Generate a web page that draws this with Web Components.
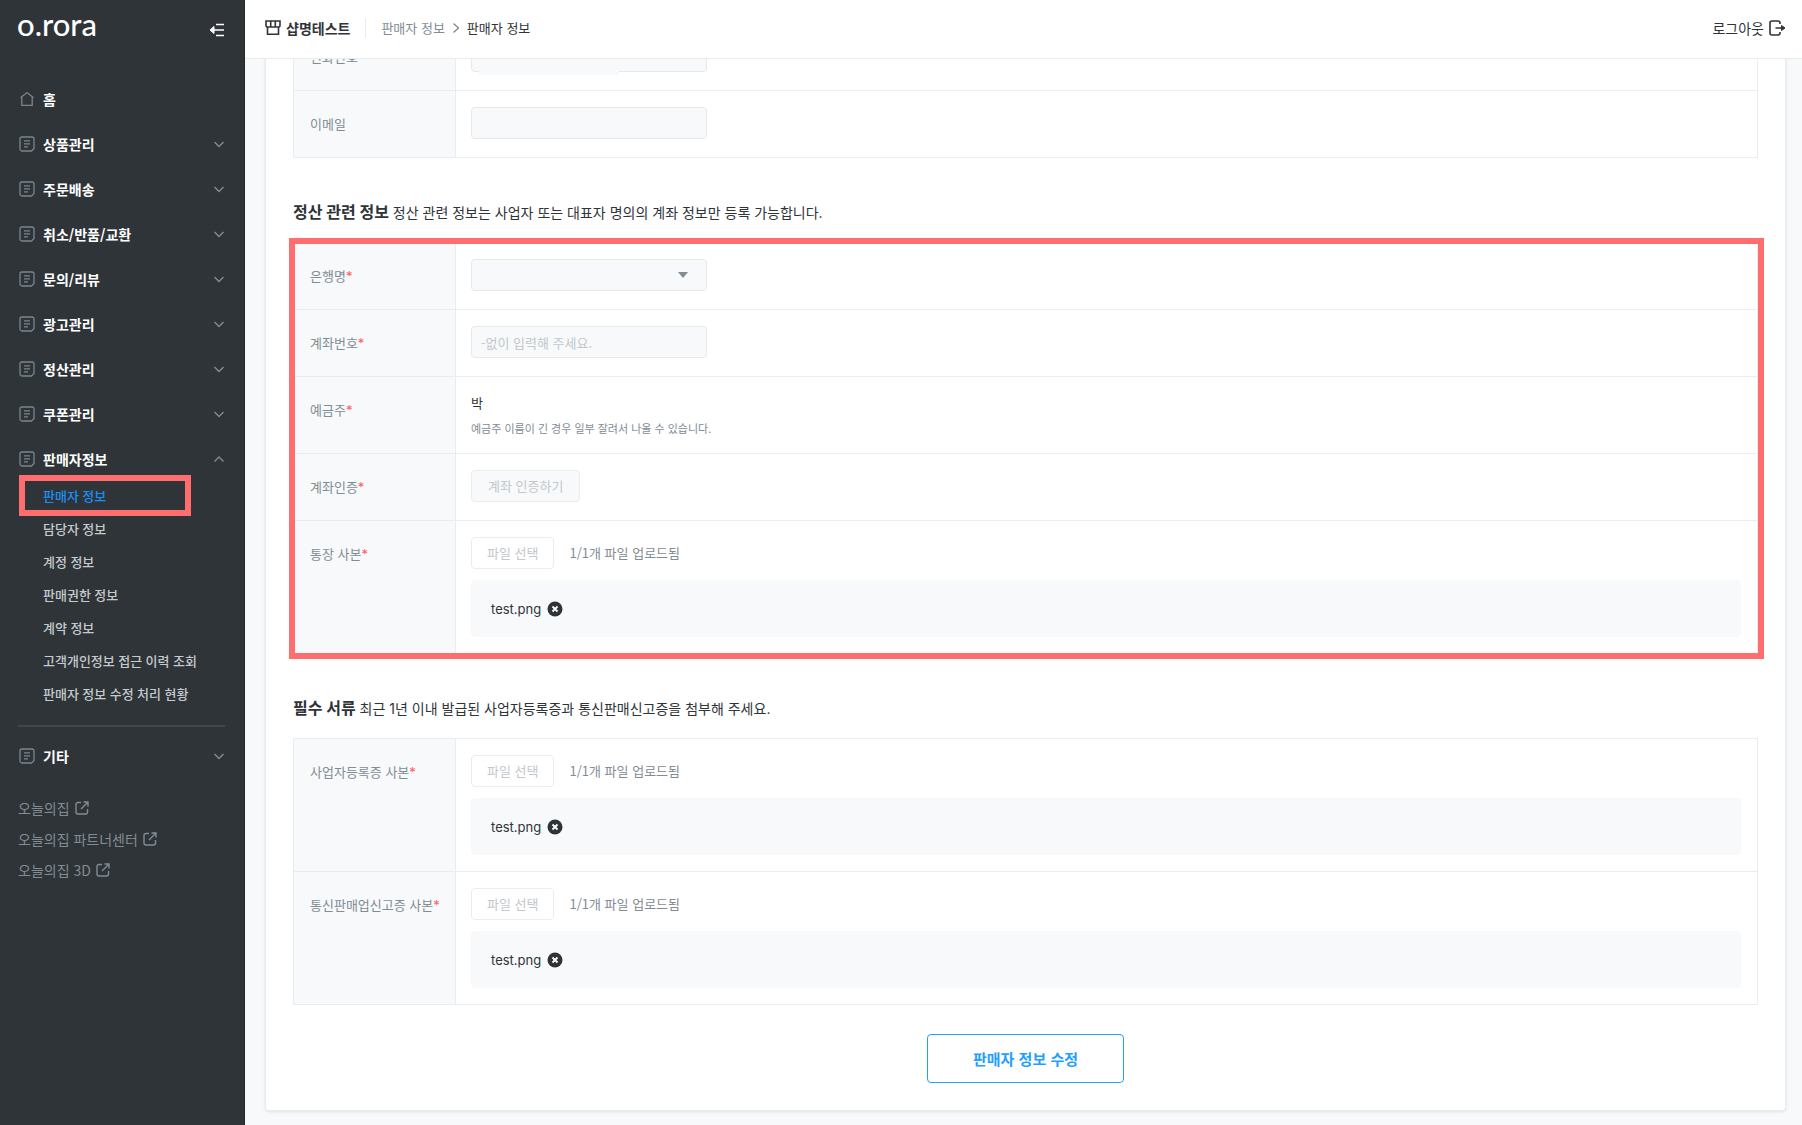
<!DOCTYPE html>
<html lang="ko">
<head>
<meta charset="utf-8">
<title>판매자 정보</title>
<style>
  :root {
    --ink: #2f3438; --gray: #828c94; --faint: #c2c8cc; --line: #eaedef;
    --soft: #f7f9fa; --blue: #1fa0ff; --mark: #ff6e6e;
    --ko: "Noto Sans CJK KR", sans-serif;
    --latin: Inter, "Noto Sans CJK KR", sans-serif;
  }
  body { margin: 0; font: 13px/20px var(--ko); color: var(--ink); background: var(--soft); }
</style>
</head>
<body>
<seller-app></seller-app>

<script>
const define = (name, html, Base = HTMLElement) => {
  const tpl = document.createElement('template');
  tpl.innerHTML = html;
  customElements.define(name, class extends Base {
    constructor() {
      super();
      this.attachShadow({ mode: 'open' }).append(tpl.content.cloneNode(true));
    }
  });
};

/* Line icons, chosen by the name attribute */
const ICONS = {
  home: [16, 16, '<path d="M1.500 6.800 8 1.500l6.500 5.300M2.800 6v8.300h10.400V6"/>'],
  doc: [16, 16, '<path d="M3 1h10a2 2 0 0 1 2 2v9.500L12.500 15H3a2 2 0 0 1-2-2V3a2 2 0 0 1 2-2zM5 4.800h6M5 7.800h6M5 10.800h4"/>'],
  down: [12, 8, '<path d="m1.500 2 4.500 4.500L10.500 2"/>'],
  up: [12, 8, '<path d="M1.500 6.500 6 2l4.500 4.500"/>'],
  out: [14, 14, '<path d="M6 1.500H3a2 2 0 0 0-2 2V11a2 2 0 0 0 2 2h7.500a2 2 0 0 0 2-2V8M8.500 1H13v4.500M13 1 6 8"/>'],
  fold: [16, 14, '<path d="M7 1.500h8M3 7h12M7 12.500h8" /><path d="M5 3.500 1 7l4 3.500z" fill="currentColor" stroke-width="1"/>'],
  shop: [16, 16, '<path d="M1 1h14v4.500a1.500 1.500 0 0 1-1.500 1.500h-11A1.500 1.500 0 0 1 1 5.500zM5.700 1v5.500M10.300 1v5.500M2.500 7v7.200h11V7"/>'],
  right: [8, 12, '<path d="m1.500 1.500 5 4.500-5 4.500"/>'],
  exit: [17, 16, '<path d="M11 4V3a2 2 0 0 0-2-2H3a2 2 0 0 0-2 2v10a2 2 0 0 0 2 2h6a2 2 0 0 0 2-2v-1M6.500 8H14"/><path d="m12.500 5.500 3.500 2.500-3.500 2.500z" fill="currentColor" stroke-width="1"/>'],
  remove: [16, 16, '<circle cx="8" cy="8" r="7.500" fill="currentColor" stroke="none"/><path d="m5.500 5.500 5 5m0-5-5 5" stroke="#fff" stroke-width="1.800"/>'],
  caret: [10, 6, '<path d="M0 0h10L5 6z" fill="currentColor" stroke="none"/>']
};
customElements.define('line-icon', class extends HTMLElement {
  constructor() { super(); this.attachShadow({ mode: 'open' }); }
  connectedCallback() {
    const [w, h, body] = ICONS[this.getAttribute('name')];
    this.shadowRoot.innerHTML = `<style>:host{display:inline-flex;flex:none}svg{display:block}</style>
      <svg width="${w}" height="${h}" viewBox="0 0 ${w} ${h}" fill="none" stroke="currentColor" stroke-width="${this.getAttribute('weight') || 1.4}" aria-hidden="true">${body}</svg>`;
  }
});

define('nav-group', `
  <style>
    :host { display: block; }
    button { all: unset; box-sizing: border-box; display: flex; align-items: center; gap: 8px; width: 100%; height: 45px;
      padding: 0 19px; cursor: pointer; color: #fff; font: bold 14px/20px var(--ko); }
    .lead { color: #7b858d; }
    .arrow { margin-left: auto; color: #828c94; }
    ::slotted(ul) { list-style: none; margin: -2px 0 0; padding: 0; }
  </style>
  <button type="button"><line-icon class="lead" name="doc" weight="1.300"></line-icon><slot name="label"></slot><slot name="arrow"><line-icon class="arrow" name="down"></line-icon></slot></button>
  <slot></slot>`);

define('app-sidebar', `
  <style>
    :host { display: block; box-sizing: border-box; width: 245px; flex: none; background: #2f3438; border-right: 1px solid #24282b; color: #c5cacd; }
    .brand { display: flex; align-items: center; justify-content: space-between; height: 59px; padding: 0 19px 0 17px; }
    .logo { color: #fff; text-decoration: none; font: 500 31px/48px Lato, sans-serif; align-self: flex-start; }
    .fold { all: unset; display: flex; color: #fff; cursor: pointer; }
    nav { padding-top: 17px; }
    .home { display: flex; align-items: center; gap: 8px; height: 45px; padding: 0 19px; color: #fff; font: bold 14px/20px var(--ko); text-decoration: none; }
    .home line-icon { color: #7b858d; }
    .arrow { margin-left: auto; color: #828c94; }
    li { position: relative; display: flex; align-items: center; height: 33px; padding-left: 43px; }
    li a { color: inherit; text-decoration: none; font: 500 13px/20px var(--latin); }
    li a[aria-current] { color: #1890f5; }
    .mark { position: absolute; inset: -4px 53px -4px 19px; border: 6px solid var(--mark); pointer-events: none; }
    hr { height: 2px; margin: 15px 19px 6px 18px; border: 0; background: #3f474d; }
    .links { display: flex; flex-direction: column; padding: 14px 18px; }
    .links a { display: flex; align-items: center; gap: 5px; height: 31px; color: #828c94; font: 14px/20px var(--ko); text-decoration: none; }
  </style>
  <div class="brand"><a class="logo" href="#">o.rora</a><button class="fold" type="button" aria-label="메뉴 접기"><line-icon name="fold" weight="1.600"></line-icon></button></div>
  <nav>
    <a class="home" href="#"><line-icon name="home" weight="1.300"></line-icon>홈</a>
    <nav-group><span slot="label">상품관리</span></nav-group>
    <nav-group><span slot="label">주문배송</span></nav-group>
    <nav-group><span slot="label">취소/반품/교환</span></nav-group>
    <nav-group><span slot="label">문의/리뷰</span></nav-group>
    <nav-group><span slot="label">광고관리</span></nav-group>
    <nav-group><span slot="label">정산관리</span></nav-group>
    <nav-group><span slot="label">쿠폰관리</span></nav-group>
    <nav-group><span slot="label">판매자정보</span><line-icon slot="arrow" class="arrow" name="up"></line-icon>
      <ul>
        <li><a href="#" aria-current="page">판매자 정보</a><span class="mark"></span></li>
        <li><a href="#">담당자 정보</a></li>
        <li><a href="#">계정 정보</a></li>
        <li><a href="#">판매권한 정보</a></li>
        <li><a href="#">계약 정보</a></li>
        <li><a href="#">고객개인정보 접근 이력 조회</a></li>
        <li><a href="#">판매자 정보 수정 처리 현황</a></li>
      </ul>
    </nav-group>
    <hr>
    <nav-group><span slot="label">기타</span></nav-group>
    <div class="links">
      <a href="#">오늘의집<line-icon name="out"></line-icon></a>
      <a href="#">오늘의집 파트너센터<line-icon name="out"></line-icon></a>
      <a href="#">오늘의집 3D<line-icon name="out"></line-icon></a>
    </div>
  </nav>`);

define('app-header', `
  <style>
    :host { display: flex; align-items: center; box-sizing: border-box; height: 59px; padding: 0 16px 3px 20px; background: #fff; border-bottom: 1px solid var(--line); position: relative; z-index: 1; }
    a { color: inherit; text-decoration: none; }
    .shop { display: flex; align-items: center; gap: 5px; font: bold 14px/20px var(--ko); padding-right: 15px; border-right: 1px solid var(--line); }
    nav { display: flex; align-items: center; gap: 7px; padding-left: 15px; font: 13px/20px var(--ko); }
    nav a, nav line-icon { color: var(--gray); }
    nav [aria-current] { color: var(--ink); }
    .exit { display: flex; align-items: center; gap: 5px; margin-left: auto; font-size: 14px; }
  </style>
  <a class="shop" href="#"><line-icon name="shop" weight="1.600"></line-icon>샵명테스트</a>
  <nav><a href="#">판매자 정보</a><line-icon name="right"></line-icon><a href="#" aria-current="page">판매자 정보</a></nav>
  <a class="exit" href="#">로그아웃<line-icon name="exit" weight="1.600"></line-icon></a>`);

define('file-field', `
  <style>
    :host { display: flex; flex-direction: column; gap: 11px; }
    .pick { display: flex; align-items: center; gap: 15px; color: var(--gray); font: 13px/20px var(--ko); }
    .pick button { box-sizing: border-box; height: 32px; padding: 0 15px; border: 1px solid var(--line); border-radius: 4px; background: #fff; color: var(--faint); font: 13px/20px var(--ko); }
    .files { box-sizing: border-box; display: flex; align-items: center; gap: 6px; height: 57px; padding: 0 20px; border-radius: 4px; background: var(--soft); font: 13px/20px var(--latin); }
    .files button { all: unset; display: flex; cursor: pointer; }
  </style>
  <div class="pick"><button type="button" disabled>파일 선택</button><span>1/1개 파일 업로드됨</span></div>
  <div class="files"><slot></slot><button type="button" aria-label="파일 삭제"><line-icon name="remove"></line-icon></button></div>`,
  class extends HTMLElement { static formAssociated = true; });

define('section-title', `
  <style>
    :host { display: block; padding: 42px 0 17px; font: 14px/24px var(--latin); color: var(--ink); }
    h2 { display: inline; margin: 0; font: bold 16px/24px var(--latin); }
  </style>
  <h2><slot name="title"></slot></h2> <slot></slot>`);

define('seller-form', `
  <style>
    :host { display: block; box-sizing: border-box; margin: -36px 16px 0 20px; padding: 0 27px 27px; background: #fff; border: 1px solid var(--line); border-top: 0; border-radius: 0 0 4px 4px; box-shadow: 0 1px 3px rgba(63, 71, 77, .12); }
    table { width: 100%; border: 1px solid var(--line); border-bottom: 0; border-spacing: 0; table-layout: fixed; }
    col { width: 162px; }
    th, td { box-sizing: border-box; height: 67px; border-bottom: 1px solid var(--line); vertical-align: top; text-align: left; }
    th { padding: 23px 10px 0 16px; border-right: 1px solid var(--line); background: var(--soft); color: var(--gray); font-weight: normal; white-space: nowrap; }
    td { padding: 16px 16px 16px 15px; }
    b { color: #ff5c5c; font: 13px/20px var(--latin); }
    input, select { box-sizing: border-box; display: block; width: 236px; height: 32px; padding: 0 9px; border: 1px solid #e6e9eb; border-radius: 4px; background: var(--soft); color: var(--ink); font: 13px/20px var(--ko); appearance: none; opacity: 1; }
    input::placeholder { color: var(--faint); opacity: 1; }
    .pick { display: grid; width: 236px; align-items: center; }
    .pick > * { grid-area: 1 / 1; }
    .pick line-icon { justify-self: end; margin-right: 19px; color: var(--gray); pointer-events: none; }
    .check { box-sizing: border-box; display: block; height: 32px; padding: 0 16px; border: 1px solid var(--line); border-radius: 4px; background: var(--soft); color: var(--faint); font: 13px/20px var(--ko); }
    p { margin: 0; }
    .hint { margin-top: 6px; color: var(--gray); font-size: 11px; line-height: 18px; }
    .holder td { height: 77px; }
    .masked { position: relative; }
    .masked span { position: absolute; left: 8px; top: 10px; width: 140px; height: 25px; background: var(--soft); }
    .marked { position: relative; }
    .marked::after { content: ""; position: absolute; inset: -4px -6px -5px -4px; border: 6px solid var(--mark); pointer-events: none; }
    .submit { display: block; box-sizing: border-box; width: 197px; height: 49px; margin: 29px auto 0; border: 1px solid var(--blue); border-radius: 4px; background: #fff; color: var(--blue); font: bold 15px/20px var(--ko); cursor: pointer; }
  </style>
  <form>
    <table><colgroup><col><col style="width:auto"></colgroup>
      <tr><th scope="row"><label for="phone">전화번호</label></th><td><div class="masked"><input id="phone" disabled><span></span></div></td></tr>
      <tr><th scope="row"><label for="mail">이메일</label></th><td><input id="mail" type="email" disabled></td></tr>
    </table>
    <section-title><span slot="title">정산 관련 정보</span>정산 관련 정보는 사업자 또는 대표자 명의의 계좌 정보만 등록 가능합니다.</section-title>
    <div class="marked">
      <table><colgroup><col><col style="width:auto"></colgroup>
        <tr><th scope="row"><label for="bank">은행명<b>*</b></label></th><td><div class="pick"><select id="bank" disabled><option></option></select><line-icon name="caret"></line-icon></div></td></tr>
        <tr><th scope="row"><label for="account">계좌번호<b>*</b></label></th><td><input id="account" placeholder="-없이 입력해 주세요." disabled></td></tr>
        <tr class="holder"><th scope="row">예금주<b>*</b></th><td><p>박</p><p class="hint">예금주 이름이 긴 경우 일부 잘려서 나올 수 있습니다.</p></td></tr>
        <tr><th scope="row"><label for="check">계좌인증<b>*</b></label></th><td><button class="check" id="check" type="button" disabled>계좌 인증하기</button></td></tr>
        <tr><th scope="row"><label for="book">통장 사본<b>*</b></label></th><td><file-field id="book">test.png</file-field></td></tr>
      </table>
    </div>
    <section-title><span slot="title">필수 서류</span>최근 1년 이내 발급된 사업자등록증과 통신판매신고증을 첨부해 주세요.</section-title>
    <table><colgroup><col><col style="width:auto"></colgroup>
      <tr><th scope="row"><label for="biz">사업자등록증 사본<b>*</b></label></th><td><file-field id="biz">test.png</file-field></td></tr>
      <tr><th scope="row"><label for="mailorder">통신판매업신고증 사본<b>*</b></label></th><td><file-field id="mailorder">test.png</file-field></td></tr>
    </table>
    <button class="submit" type="button">판매자 정보 수정</button>
  </form>`);

define('seller-app', `
  <style>
    :host { display: flex; min-height: 100vh; }
    main { flex: 1; min-width: 0; padding-bottom: 14px; }
  </style>
  <app-sidebar></app-sidebar>
  <main><app-header></app-header><seller-form></seller-form></main>`);
</script>
</body>
</html>
